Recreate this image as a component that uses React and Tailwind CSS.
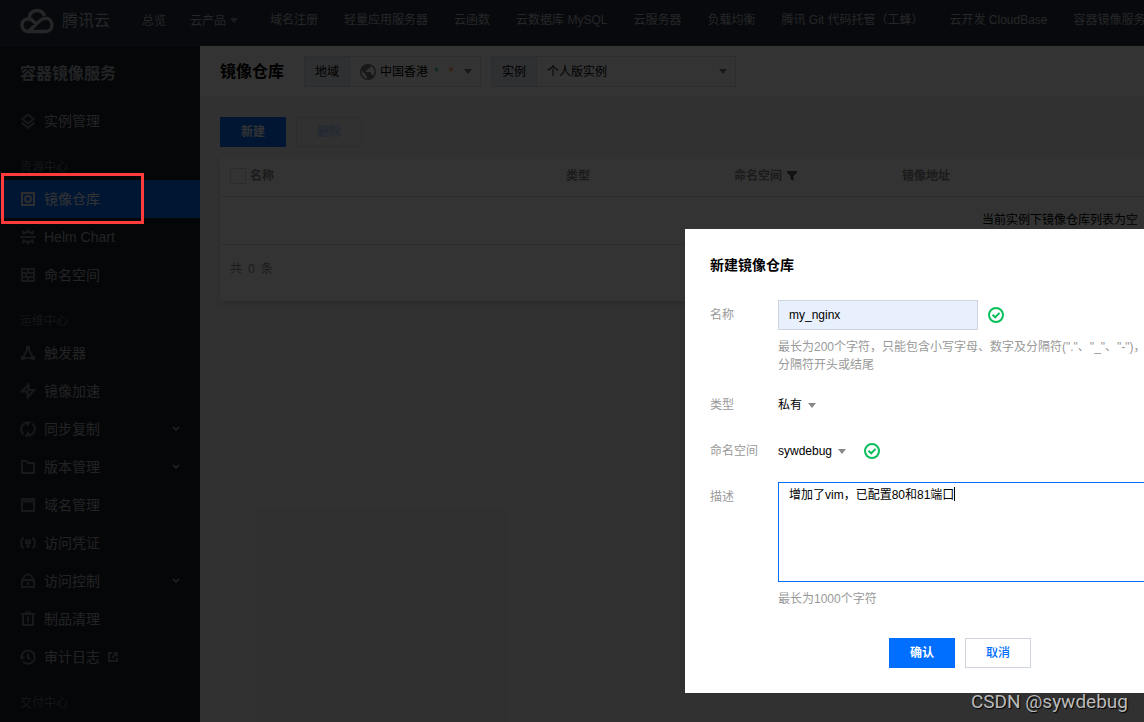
import { useState } from "react";

const navLinks = [
  "域名注册",
  "轻量应用服务器",
  "云函数",
  "云数据库 MySQL",
  "云服务器",
  "负载均衡",
  "腾讯 Git 代码托管（工蜂）",
  "云开发 CloudBase",
  "容器镜像服务",
];

const menu = [
  { items: [{ name: "实例管理", icon: "layers" }] },
  {
    title: "资源中心",
    items: [
      { name: "镜像仓库", icon: "repo", active: true },
      { name: "Helm Chart", icon: "helm" },
      { name: "命名空间", icon: "grid" },
    ],
  },
  {
    title: "运维中心",
    items: [
      { name: "触发器", icon: "trigger" },
      { name: "镜像加速", icon: "bolt" },
      { name: "同步复制", icon: "sync", more: true },
      { name: "版本管理", icon: "folder", more: true },
      { name: "域名管理", icon: "window" },
      { name: "访问凭证", icon: "key" },
      { name: "访问控制", icon: "lock", more: true },
      { name: "制品清理", icon: "trash" },
      { name: "审计日志", icon: "history", external: true },
    ],
  },
  { title: "交付中心", items: [] },
];

const icons = {
  layers: (
    <>
      <path d="M8 1.5L13.5 6L8 10.5L2.5 6Z" />
      <path d="M1.5 9.5L8 14.8L14.5 9.5" />
    </>
  ),
  repo: (
    <>
      <path d="M2 2H14V14H2Z" />
      <circle cx="8" cy="8" r="3" />
    </>
  ),
  helm: (
    <>
      <path d="M0 8H16" />
      <path d="M3 5.5C5 2.2 11 2.2 13 5.5M3 10.5C5 13.8 11 13.8 13 10.5" />
      <path d="M8 0.5V3M2.2 2L4 4M13.8 2L12 4M8 13V15.5M2.2 14L4 12M13.8 14L12 12" />
    </>
  ),
  grid: <path d="M2 2H14V14H2ZM2 6H14M2 10H14M8 2V6M6 6V10M8 10V14" />,
  trigger: (
    <>
      <path d="M7.5 4L3.5 12M8.5 4L12.5 12M4 13H12" />
      <path
        d="M6 1H10V5H6ZM1 11H5V15H1ZM11 11H15V15H11Z"
        fill="currentColor"
        stroke="none"
      />
    </>
  ),
  bolt: <path d="M8.5 1.5L1.8 8.5H7.5V14.5L14.2 7H8.5Z" />,
  sync: (
    <>
      <path d="M3.5 13.5C-0.5 10 0.5 3 7.5 1.5M12.5 2.5C16.5 6 15.5 13 8.5 14.5" />
      <path
        d="M6 0.5H11.5L7.5 6ZM10 15.5H4.5L8.5 10Z"
        fill="currentColor"
        stroke="none"
      />
    </>
  ),
  folder: <path d="M2 14V2H6.5L8 4H14V14Z" />,
  window: <path d="M2 2H14V14H2ZM2 4.5H14M5.5 2V5M8.5 2V5" />,
  key: (
    <>
      <path d="M3.5 2.5C0.2 5.5 0.2 10.5 3.5 13.5M12.5 2.5C15.8 5.5 15.8 10.5 12.5 13.5" />
      <path d="M6 5.5H10V8H6ZM7.5 8V13M7.5 11.5H10" />
    </>
  ),
  lock: <path d="M2 7H14V14H2ZM3.2 7C3.2 -0.2 12.8 -0.2 12.8 7M8 9V12" />,
  trash: <path d="M1 3H15M5 1.5H11M3 3V14H13V3M8 5.5V11.5" />,
  history: (
    <>
      <path d="M1.5 9.5C1 4.5 4 1.5 8 1.5C12 1.5 14.7 4.5 14.7 8C14.7 12 12 14.7 8 14.7C6 14.7 4.5 14 3 12.5" />
      <path d="M8 4.5V8.5L10.5 10.5M0.5 7.5L2 9.5L4.5 8" />
    </>
  ),
};

function MenuIcon({ name }) {
  return (
    <svg
      className="w-4 h-4 shrink-0"
      viewBox="0 0 16 16"
      fill="none"
      stroke="currentColor"
      strokeWidth="2"
      aria-hidden="true"
    >
      {icons[name]}
    </svg>
  );
}

function Caret({ className }) {
  return (
    <svg
      className={`w-2 h-[5px] shrink-0 pointer-events-none ${className || ""}`}
      viewBox="0 0 8 5"
      fill="currentColor"
      aria-hidden="true"
    >
      <path d="M0 0H8L4 5Z" />
    </svg>
  );
}

function CheckIcon() {
  return (
    <svg
      className="w-4 h-4 shrink-0"
      viewBox="0 0 16 16"
      fill="none"
      stroke="#0abf5b"
      strokeWidth="2"
      aria-hidden="true"
    >
      <circle cx="8" cy="8" r="7" />
      <path d="M4.5 7.7L7.2 10.3L11.6 5.9" />
    </svg>
  );
}

function TopBar() {
  return (
    <header className="h-[46px] shrink-0 flex items-center bg-[#262f3e] border-b border-[#303846] pl-5 text-xs text-[#b8bdc6] whitespace-nowrap overflow-hidden">
      <a href="#home" className="flex items-center gap-2 text-base mr-8 mb-1">
        <svg
          className="w-[34px] h-[26px]"
          viewBox="0 0 34 26"
          fill="none"
          stroke="currentColor"
          strokeWidth="3.4"
          aria-hidden="true"
        >
          <path d="M9.5 11C9 5.5 12.5 2.5 17 2.5C21 2.5 23.5 5 24.3 8" />
          <path d="M17.5 17L11.5 11.8C6.5 9.5 2 12.5 2 17C2 21 4.8 23.5 8.5 23.5H25.5C29.5 23.5 32 20.8 32 17C32 13 29 10.3 25.3 10.3C22.5 10.3 20.8 11.7 19 13.4L9 23" />
        </svg>
        <span>腾讯云</span>
      </a>
      <a href="#overview" className="mr-6 mb-1">
        总览
      </a>
      <button className="flex items-center gap-1 mr-4 mb-1">
        云产品
        <Caret className="text-[#7f8693]" />
      </button>
      <span className="w-px h-5 bg-[#45505f] mr-4 mb-1" />
      <nav className="flex gap-[26px] mb-[6px]">
        {navLinks.map((link) => (
          <a key={link} href="#product">
            {link}
          </a>
        ))}
      </nav>
    </header>
  );
}

function Sidebar() {
  return (
    <aside className="w-[200px] shrink-0 bg-[#1b2028] text-sm text-[#a9adb4]">
      <h2 className="h-14 flex items-center pl-5 text-base font-bold">
        容器镜像服务
      </h2>
      {menu.map((group, i) => (
        <div key={i}>
          {group.title && (
            <div className="h-10 pt-[17px] pl-5 text-xs leading-5 text-[#666b73]">
              {group.title}
            </div>
          )}
          {group.items.map((item) => (
            <a
              key={item.name}
              href="#menu"
              className={`h-[38px] flex items-center gap-2 px-5 ${
                item.active ? "bg-[#006eff] text-white" : ""
              }`}
            >
              <span
                className={item.active ? "text-[#e0e0e0]" : "text-[#767b83]"}
              >
                <MenuIcon name={item.icon} />
              </span>
              {item.name}
              {item.more && (
                <svg
                  className="w-2 h-2 ml-auto"
                  viewBox="0 0 8 8"
                  fill="none"
                  stroke="currentColor"
                  strokeWidth="1.5"
                  aria-hidden="true"
                >
                  <path d="M1 2L4 5L7 2" />
                </svg>
              )}
              {item.external && (
                <svg
                  className="w-[10px] h-[10px] text-[#767b83]"
                  viewBox="0 0 10 10"
                  fill="none"
                  stroke="currentColor"
                  strokeWidth="2"
                  aria-hidden="true"
                >
                  <path d="M4 1H1V9H9V6M5.5 1H9V4.5M9 1L4 6" />
                </svg>
              )}
            </a>
          ))}
        </div>
      ))}
    </aside>
  );
}

function Toolbar() {
  return (
    <div className="h-[51px] flex items-center pl-5 bg-white text-xs text-black">
      <h1 className="text-base font-bold mr-5">镜像仓库</h1>
      <div className="w-[177px] h-[31px] flex items-center border border-[#dcdfe5] mr-[10px]">
        <label
          htmlFor="region"
          className="self-stretch flex items-center px-[10px] bg-[#eaeef5] border-r border-[#dcdfe5]"
        >
          地域
        </label>
        <svg
          className="w-4 h-4 ml-[10px] mr-1 text-[#777]"
          viewBox="0 0 16 16"
          aria-hidden="true"
        >
          <circle cx="8" cy="8" r="8" fill="currentColor" />
          <path
            d="M1.6 6.5L6 11V12L7.2 13V14.4C3.8 14 1.6 11.3 1.6 8ZM10.5 2L10.5 3.2L9.5 4.6H7.6V6L6 6.6V8H10.6L11.3 10.8H12.6L13.2 11.8C15.6 8.3 14.6 3.8 10.5 2Z"
            fill="#fff"
          />
        </svg>
        <select
          id="region"
          className="appearance-none field-sizing-content outline-none"
        >
          <option>中国香港</option>
        </select>
        <span className="ml-[6px] text-[#0abf5b]">*</span>
        <span className="ml-[10px] text-[#ff7200]">*</span>
        <Caret className="ml-auto mr-2 text-[#777]" />
      </div>
      <div className="w-[245px] h-[31px] flex items-center border border-[#dcdfe5]">
        <label
          htmlFor="instance"
          className="self-stretch flex items-center px-[10px] bg-[#eaeef5] border-r border-[#dcdfe5]"
        >
          实例
        </label>
        <select
          id="instance"
          className="appearance-none flex-1 pl-[10px] outline-none"
        >
          <option>个人版实例</option>
        </select>
        <Caret className="mr-2 text-[#777]" />
      </div>
    </div>
  );
}

function RepoTable() {
  return (
    <div className="min-w-[1680px] bg-white shadow-md text-xs text-[#888]">
      <table className="w-full table-fixed text-left">
        <thead>
          <tr className="h-[39px] border-b border-[#dcdfe5]">
            <th className="w-1/5 px-[10px]">
              <label className="flex items-center gap-1">
                <input
                  type="checkbox"
                  className="appearance-none w-4 h-4 border border-[#cfd5de]"
                />
                名称
              </label>
            </th>
            <th className="w-1/10 px-[10px]">类型</th>
            <th className="w-1/10 px-[10px]">
              <div className="flex items-center gap-[5px]">
                命名空间
                <svg
                  className="w-[10px] h-[10px] text-[#555]"
                  viewBox="0 0 10 10"
                  fill="currentColor"
                  aria-hidden="true"
                >
                  <path d="M0 0H10V1.5L6.5 5V10L3.5 8V5L0 1.5Z" />
                </svg>
              </div>
            </th>
            <th className="px-[10px]">镜像地址</th>
          </tr>
        </thead>
        <tbody>
          <tr className="h-12 border-b border-[#dcdfe5]">
            <td colSpan={4} className="text-center text-black">
              当前实例下镜像仓库列表为空
            </td>
          </tr>
        </tbody>
      </table>
      <div className="h-14 px-[10px] pt-[14px] leading-5 flex gap-[6px]">
        <span>共</span>
        <span>0</span>
        <span>条</span>
      </div>
    </div>
  );
}

function CreateDialog() {
  const [name, setName] = useState("my_nginx");
  const [desc, setDesc] = useState("增加了vim，已配置80和81端口");

  return (
    <form
      role="dialog"
      aria-labelledby="dialog-title"
      onSubmit={(e) => e.preventDefault()}
      className="absolute left-[685px] top-[229px] w-[550px] p-[25px] bg-white text-xs text-black"
    >
      <h3
        id="dialog-title"
        className="text-sm leading-[22px] font-bold mb-6"
      >
        新建镜像仓库
      </h3>

      <div className="flex mb-4">
        <label htmlFor="name" className="w-[68px] leading-[30px] text-[#999]">
          名称
        </label>
        <div className="flex-1">
          <div className="flex items-center gap-[10px]">
            <input
              id="name"
              type="text"
              value={name}
              onChange={(e) => setName(e.target.value)}
              className="w-[200px] h-[30px] px-[10px] bg-[#e8f0fe] border border-[#cfd5de] outline-none"
            />
            <CheckIcon />
          </div>
          <p className="mt-2 leading-[18px] text-[#999] whitespace-nowrap">
            最长为200个字符，只能包含小写字母、数字及分隔符("."、"_"、"-")，
            <br />
            分隔符开头或结尾
          </p>
        </div>
      </div>

      <div className="flex mb-4">
        <label htmlFor="type" className="w-[68px] leading-[30px] text-[#999]">
          类型
        </label>
        <div className="h-[30px] flex items-center gap-[6px]">
          <select
            id="type"
            className="appearance-none field-sizing-content outline-none"
          >
            <option>私有</option>
          </select>
          <Caret className="text-[#888]" />
        </div>
      </div>

      <div className="flex mb-4">
        <label
          htmlFor="namespace"
          className="w-[68px] leading-[30px] text-[#999]"
        >
          命名空间
        </label>
        <div className="h-[30px] flex items-center gap-[6px]">
          <select
            id="namespace"
            className="appearance-none field-sizing-content outline-none"
          >
            <option>sywdebug</option>
          </select>
          <Caret className="text-[#888] mr-3" />
          <CheckIcon />
        </div>
      </div>

      <div className="flex">
        <label htmlFor="desc" className="w-[68px] leading-[30px] text-[#999]">
          描述
        </label>
        <div className="flex-1 relative">
          <textarea
            id="desc"
            autoFocus
            value={desc}
            onChange={(e) => setDesc(e.target.value)}
            className="block w-full h-[100px] px-[10px] py-[3px] leading-[18px] caret-transparent border border-[#006eff] outline-none resize-none"
          />
          <span className="absolute left-44 top-[5px] w-px h-[14px] bg-black" />
          <p className="mt-2 leading-[18px] text-[#999]">最长为1000个字符</p>
        </div>
      </div>

      <div className="flex justify-center gap-[10px] mt-[30px]">
        <button
          type="submit"
          className="w-[66px] h-[30px] bg-[#006eff] text-white font-bold"
        >
          确认
        </button>
        <button
          type="button"
          className="w-[66px] h-[30px] border border-[#cfd5de] text-[#006eff] font-medium"
        >
          取消
        </button>
      </div>
    </form>
  );
}

export default function App() {
  return (
    <div className="relative h-screen flex flex-col overflow-hidden font-['Liberation_Sans','Noto_Sans_CJK_SC',sans-serif]">
      <TopBar />
      <div className="flex flex-1 min-h-0">
        <Sidebar />
        <main className="flex-1 min-w-0 overflow-hidden bg-[#f2f2f2]">
          <Toolbar />
          <div className="p-5">
            <div className="flex gap-[10px] mb-[10px] text-xs">
              <button className="w-[66px] h-[30px] bg-[#006eff] text-white font-bold">
                新建
              </button>
              <button
                disabled
                className="w-[66px] h-[30px] border border-[#dcdfe5] text-[#8dbdff]"
              >
                删除
              </button>
            </div>
            <RepoTable />
          </div>
        </main>
      </div>

      <div className="absolute inset-0 overflow-hidden bg-black/80">
        <CreateDialog />
      </div>

      <div className="absolute left-px top-[173px] w-[143px] h-[51px] border-3 border-[#ff3b3b]" />
      <div className="absolute right-4 bottom-1 text-[19px] leading-8 text-[#bbb] [text-shadow:1px_1px_1px_#000] font-[Roboto,sans-serif]">
        CSDN @sywdebug
      </div>
    </div>
  );
}
